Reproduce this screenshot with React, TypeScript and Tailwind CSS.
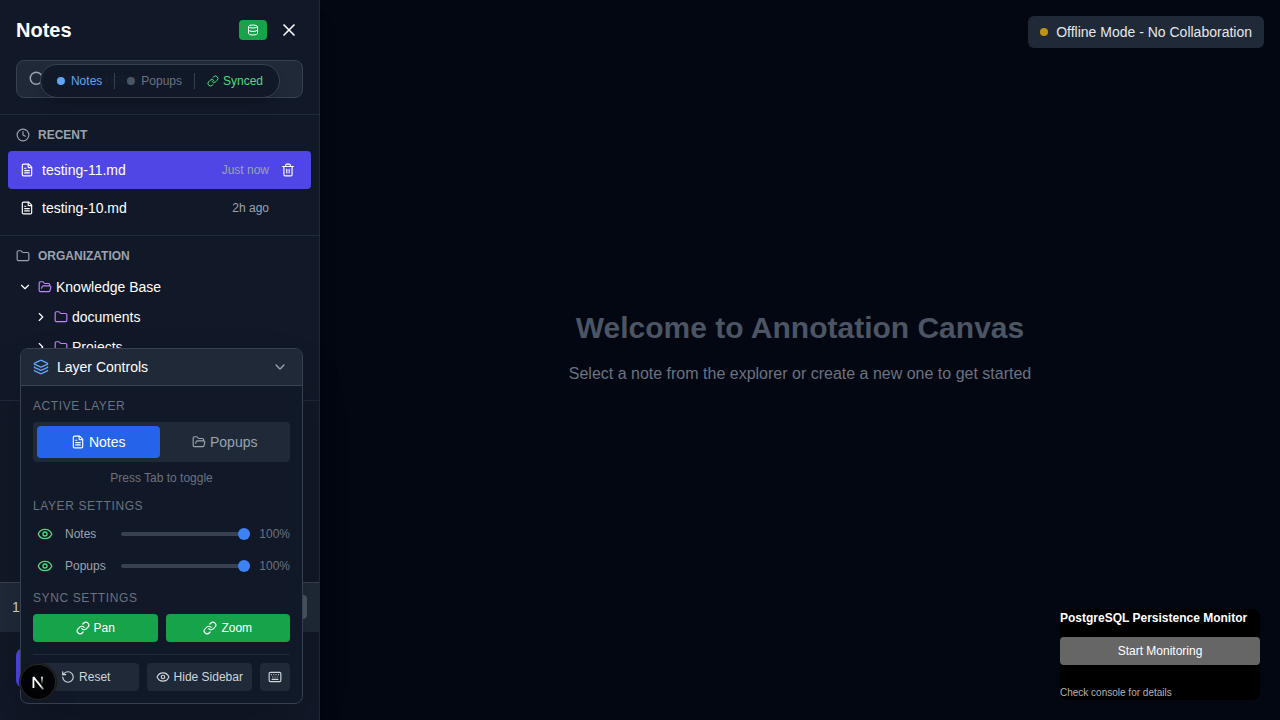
import { useState } from "react";
import type { ReactNode } from "react";
import {
  ChevronDown,
  ChevronRight,
  Clock,
  Database,
  Eye,
  FileText,
  Folder,
  FolderOpen,
  Keyboard,
  Layers,
  Link,
  RotateCcw,
  Search,
  Trash2,
  X,
} from "lucide-react";

function SectionHeading({ icon, children }: { icon: ReactNode; children: ReactNode }) {
  return (
    <h2 className="flex items-center gap-2 px-4 pt-3 pb-2 text-xs leading-4 font-bold text-[#9ca3af] uppercase">
      {icon}
      {children}
    </h2>
  );
}

function RecentNote({ name, time, active }: { name: string; time: string; active?: boolean }) {
  return (
    <li
      className={
        active
          ? "flex items-center gap-2 rounded bg-[#4f46e5] px-3 py-2"
          : "flex items-center gap-2 rounded px-3 py-2"
      }
    >
      <button type="button" className="flex min-w-0 flex-1 items-center gap-2 text-left text-sm text-white">
        <FileText size={14} />
        <span className="truncate">{name}</span>
      </button>
      <span className="text-xs text-[#9ca3af]">{time}</span>
      <button
        type="button"
        aria-label={"Delete " + name}
        className={active ? "p-1 text-white" : "p-1 text-white opacity-0 hover:opacity-100"}
      >
        <Trash2 size={14} />
      </button>
    </li>
  );
}

function TreeRow({ name, open, nested }: { name: string; open?: boolean; nested?: boolean }) {
  return (
    <li className={nested ? "flex h-[30px] items-center gap-1 pl-8" : "flex h-[30px] items-center gap-1 pl-4"}>
      <button type="button" aria-label={"Toggle " + name} className="p-0.5 text-white">
        {open ? <ChevronDown size={14} /> : <ChevronRight size={14} />}
      </button>
      <span className="flex items-center gap-1 text-sm text-white">
        {open ? (
          <FolderOpen size={14} className="text-[#c084fc]" />
        ) : (
          <Folder size={14} className="text-[#c084fc]" />
        )}
        {name}
      </span>
    </li>
  );
}

function Sidebar() {
  return (
    <aside className="flex w-80 shrink-0 flex-col border-r border-[#1f2937] bg-[#111827] shadow-xl">
      <header className="border-b border-[#1f2937] p-4">
        <div className="mb-4 flex items-center gap-2">
          <h1 className="flex-1 text-xl leading-7 font-bold text-white">Notes</h1>
          <button type="button" aria-label="Database" className="rounded bg-[#16a34a] px-2 py-1 text-white">
            <Database size={12} />
          </button>
          <button type="button" aria-label="Close sidebar" className="p-1 text-white">
            <X size={20} />
          </button>
        </div>
        <label className="flex items-center gap-[11px] rounded-lg border border-[#374151] bg-[#1f2937] px-[11px] py-2 text-[#9ca3af]">
          <Search size={18} />
          <input
            type="text"
            aria-label="Search notes"
            placeholder="Search notes..."
            className="min-w-0 flex-1 bg-transparent text-sm text-white outline-none placeholder:text-[#6b7280]"
          />
        </label>
      </header>

      <section className="border-b border-[#1f2937] pb-2">
        <SectionHeading icon={<Clock size={14} />}>Recent</SectionHeading>
        <ul className="px-2">
          <RecentNote name="testing-11.md" time="Just now" active />
          <RecentNote name="testing-10.md" time="2h ago" />
        </ul>
      </section>

      <section className="border-b border-[#1f2937] pb-[38px]">
        <SectionHeading icon={<Folder size={14} />}>Organization</SectionHeading>
        <ul>
          <TreeRow name="Knowledge Base" open />
          <TreeRow name="documents" nested />
          <TreeRow name="Projects" nested />
        </ul>
      </section>

      <footer className="mt-auto">
        <div className="flex items-center justify-between border-y border-[#374151] border-b-[#1f2937] bg-[#1f2937] px-3 py-3 text-sm text-[#d1d5db]">
          <span>1</span>
          <button type="button" aria-label="More options" className="h-6 w-12 rounded bg-[#4b5563]" />
        </div>
        <div className="flex px-4 pt-4 pb-8">
          <button type="button" aria-label="New note" className="h-10 flex-1 rounded-lg bg-[#4f46e5]" />
        </div>
      </footer>
    </aside>
  );
}

function LayerStatus() {
  return (
    <div className="absolute top-16 left-40 flex -translate-x-1/2 items-center gap-3 rounded-full border border-[#374151] bg-[#111827]/95 px-4 py-2 text-xs leading-4 whitespace-nowrap shadow-lg">
      <span className="flex items-center gap-1.5 text-[#60a5fa]">
        <span className="size-2 rounded-full bg-[#60a5fa]" />
        Notes
      </span>
      <span className="h-4 w-px bg-[#374151]" />
      <span className="flex items-center gap-1.5 text-[#6b7280]">
        <span className="size-2 rounded-full bg-[#4b5563]" />
        Popups
      </span>
      <span className="h-4 w-px bg-[#374151]" />
      <span className="flex items-center gap-1 text-[#4ade80]">
        <Link size={12} />
        Synced
      </span>
    </div>
  );
}

function PanelLabel({ children }: { children: ReactNode }) {
  return <h3 className="mb-2 text-xs leading-4 tracking-wider text-[#6b7280] uppercase">{children}</h3>;
}

function LayerSlider({ id, name }: { id: string; name: string }) {
  const [value, setValue] = useState(100);
  return (
    <div className="flex items-center gap-2 text-xs leading-4">
      <button type="button" aria-label={"Toggle visibility of " + name} className="p-1 text-[#4ade80]">
        <Eye size={16} />
      </button>
      <label htmlFor={id} className="w-12 text-[#9ca3af]">
        {name}
      </label>
      <input
        id={id}
        type="range"
        min={0}
        max={100}
        value={value}
        onChange={(e) => setValue(Number(e.target.value))}
        className="h-1 min-w-0 flex-1 cursor-pointer appearance-none rounded-lg bg-[#374151] [&::-webkit-slider-thumb]:size-3 [&::-webkit-slider-thumb]:appearance-none [&::-webkit-slider-thumb]:rounded-full [&::-webkit-slider-thumb]:bg-[#3b82f6]"
      />
      <span className="w-8 text-right text-[#6b7280]">{value}%</span>
    </div>
  );
}

function LayerPanel() {
  return (
    <section className="absolute bottom-4 left-5 w-[283px] overflow-hidden rounded-lg border border-[#374151] bg-[#111827] shadow-2xl">
      <header className="flex items-center gap-2 border-b border-[#374151] bg-[#1f2937] px-3 py-2">
        <Layers size={16} className="text-[#60a5fa]" />
        <h2 className="flex-1 text-sm text-white">Layer Controls</h2>
        <button type="button" aria-label="Collapse layer controls" className="p-0.5 text-[#9ca3af]">
          <ChevronDown size={16} />
        </button>
      </header>

      <div className="flex flex-col gap-3 p-3">
        <div>
          <PanelLabel>Active Layer</PanelLabel>
          <div className="flex gap-1 rounded bg-[#1f2937] p-1 text-sm">
            <button
              type="button"
              className="flex flex-1 basis-0 items-center justify-center gap-1 rounded bg-[#2563eb] py-1.5 text-white"
            >
              <FileText size={14} />
              Notes
            </button>
            <button
              type="button"
              className="flex flex-1 basis-0 items-center justify-center gap-1 rounded py-1.5 text-[#9ca3af]"
            >
              <FolderOpen size={14} />
              Popups
            </button>
          </div>
          <p className="mt-2 text-center text-xs leading-4 text-[#6b7280]">Press Tab to toggle</p>
        </div>

        <div>
          <PanelLabel>Layer Settings</PanelLabel>
          <div className="flex flex-col gap-2">
            <LayerSlider id="notes-opacity" name="Notes" />
            <LayerSlider id="popups-opacity" name="Popups" />
          </div>
        </div>

        <div>
          <PanelLabel>Sync Settings</PanelLabel>
          <div className="flex gap-2 text-xs leading-4 text-white">
            <button type="button" className="flex flex-1 items-center justify-center gap-1 rounded bg-[#16a34a] py-1.5">
              <Link size={14} />
              Pan
            </button>
            <button type="button" className="flex flex-1 items-center justify-center gap-1 rounded bg-[#16a34a] py-1.5">
              <Link size={14} />
              Zoom
            </button>
          </div>
        </div>

        <div className="flex gap-2 border-t border-[#1f2937] pt-2 text-xs leading-4 text-[#d1d5db]">
          <button type="button" className="flex flex-1 items-center justify-center gap-1 rounded bg-[#1f2937] py-1.5">
            <RotateCcw size={14} />
            Reset
          </button>
          <button
            type="button"
            className="flex flex-1 items-center justify-center gap-1 rounded bg-[#1f2937] py-1.5 whitespace-nowrap"
          >
            <Eye size={14} />
            Hide Sidebar
          </button>
          <button type="button" aria-label="Keyboard shortcuts" className="rounded bg-[#1f2937] px-2 py-1.5">
            <Keyboard size={14} />
          </button>
        </div>
      </div>
    </section>
  );
}

function DevToolsBadge() {
  return (
    <button
      type="button"
      aria-label="Open dev tools"
      className="absolute bottom-5 left-5 size-9 rounded-full bg-black/90 shadow-[0_0_0_1px_#171717,inset_0_0_0_1px_rgba(255,255,255,0.14),0_16px_32px_-8px_rgba(0,0,0,0.24)]"
    >
      <svg viewBox="0 0 40 40" className="size-9" fill="none" aria-hidden="true">
        <defs>
          <linearGradient id="diag" x1="9.95555" y1="11.1226" x2="15.4778" y2="17.9671" gradientUnits="userSpaceOnUse">
            <stop stopColor="white" />
            <stop offset="0.7" stopColor="white" stopOpacity="0.3" />
            <stop offset="1" stopColor="white" stopOpacity="0" />
          </linearGradient>
          <linearGradient id="stem" x1="11.8222" y1="1.40039" x2="11.791" y2="9.62542" gradientUnits="userSpaceOnUse">
            <stop stopColor="white" />
            <stop offset="1" stopColor="white" stopOpacity="0" />
          </linearGradient>
        </defs>
        <g transform="translate(12.6 13)">
          <path d="M13.3 15.2 L2.34 1.5 V13.6" stroke="url(#diag)" strokeWidth="2" strokeLinejoin="bevel" />
          <path d="M11.825 1.2 V13.1" stroke="url(#stem)" strokeWidth="1.86" />
        </g>
      </svg>
    </button>
  );
}

function PersistenceMonitor() {
  return (
    <section className="absolute right-5 bottom-5 w-[200px] rounded-lg bg-black text-xs text-white">
      <h2 className="mb-2.5 leading-[18px] font-bold whitespace-nowrap">PostgreSQL Persistence Monitor</h2>
      <button type="button" className="w-full rounded bg-[#666666] py-1.5 leading-4">
        Start Monitoring
      </button>
      <p className="mt-5 text-[10px] leading-[15px] text-[#b3b3b3]">Check console for details</p>
    </section>
  );
}

export default function App() {
  return (
    <div className="relative flex h-screen min-h-[720px] overflow-hidden bg-[#030712] font-['Liberation_Sans',Arial,sans-serif]">
      <Sidebar />
      <main className="flex flex-1 flex-col items-center justify-center pb-6 text-center">
        <h2 className="mb-4 text-3xl leading-9 font-bold text-[#4b5563]">Welcome to Annotation Canvas</h2>
        <p className="text-base text-[#6b7280]">Select a note from the explorer or create a new one to get started</p>
      </main>

      <div className="absolute top-4 right-4 flex items-center gap-2 rounded-md bg-[#1f2937] px-3 py-1.5 text-sm text-[#e5e7eb]">
        <span className="size-2 rounded-full bg-[#be9311]" />
        Offline Mode - No Collaboration
      </div>

      <LayerStatus />
      <LayerPanel />
      <PersistenceMonitor />
      <DevToolsBadge />
    </div>
  );
}
